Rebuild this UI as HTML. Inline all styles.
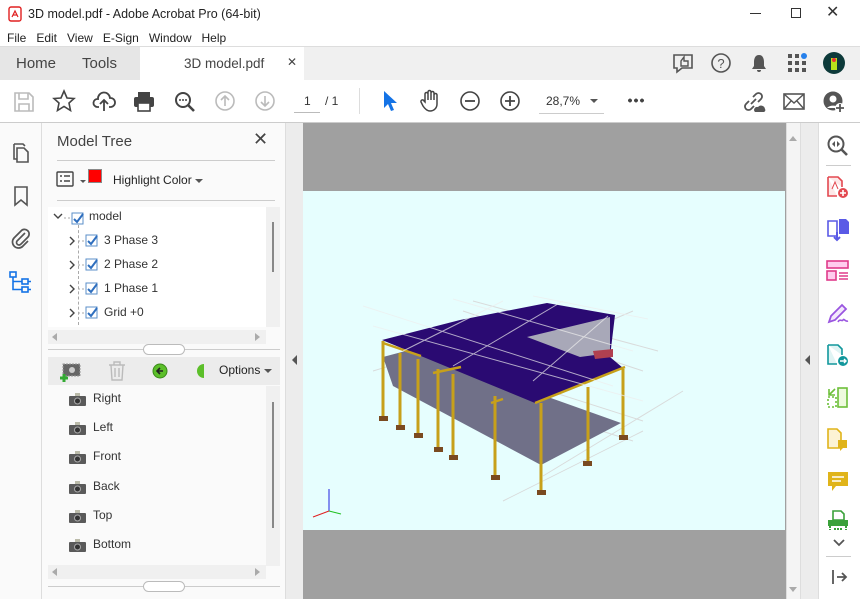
<!DOCTYPE html>
<html><head><meta charset="utf-8"><style>
*{margin:0;padding:0;box-sizing:border-box}
body{width:860px;height:599px;overflow:hidden;background:#fff;font-family:"Liberation Sans","Segoe UI",sans-serif;position:relative;color:#222}
.a{position:absolute}
.t{font-size:12px;color:#333}
svg{position:absolute;overflow:visible}
</style></head><body>
<div class="a" style="left:0;top:0;width:860px;height:28px;background:#fff"></div>
<svg style="left:8px;top:6px" width="14" height="16"><rect x="1" y="1" width="12" height="14" rx="2" fill="none" stroke="#e02020" stroke-width="1.4"/><path d="M4 11 L7 5 L10 11 M5 9 H9" stroke="#e02020" fill="none" stroke-width="1.2"/></svg>
<div class="a t" style="left:28px;top:7px;font-size:12.5px;color:#222">3D model.pdf - Adobe Acrobat Pro (64-bit)</div>
<div class="a" style="left:750px;top:13px;width:11px;height:1px;background:#333"></div>
<div class="a" style="left:791px;top:8px;width:10px;height:10px;border:1px solid #333"></div>
<div class="a" style="left:826px;top:2px;font-size:16px;color:#333">✕</div>
<div class="a t" style="left:7px;top:31px;color:#222">File&nbsp;&nbsp;&nbsp;Edit&nbsp;&nbsp;&nbsp;View&nbsp;&nbsp;&nbsp;E-Sign&nbsp;&nbsp;&nbsp;Window&nbsp;&nbsp;&nbsp;Help</div>
<div class="a" style="left:0;top:46px;width:860px;height:34px;background:#f0f0f0;border-top:1px solid #ddd"></div>
<div class="a" style="left:0;top:47px;width:140px;height:33px;background:#e6e6e6"></div>
<div class="a" style="left:140px;top:47px;width:164px;height:34px;background:#fff"></div>
<div class="a" style="left:16px;top:55px;font-size:15px;color:#444">Home</div>
<div class="a" style="left:82px;top:55px;font-size:15px;color:#444">Tools</div>
<div class="a" style="left:184px;top:56px;font-size:13.5px;color:#444">3D model.pdf</div>
<div class="a" style="left:287px;top:55px;font-size:12px;color:#444">✕</div>
<svg style="left:672px;top:53px" width="22" height="20"><path d="M2 2H20V15H10L5 19V15H2Z" fill="none" stroke="#555" stroke-width="1.6"/><path d="M9 13V8L12 4V8H16V13Z" fill="none" stroke="#555" stroke-width="1.4"/></svg>
<svg style="left:711px;top:53px" width="20" height="20"><circle cx="10" cy="10" r="9" fill="none" stroke="#555" stroke-width="1.6"/><text x="10" y="15" font-size="13" text-anchor="middle" fill="#555" font-family="Liberation Sans">?</text></svg>
<svg style="left:750px;top:54px" width="18" height="19"><path d="M9 1C5 1 4 5 4 8V12L2 15H16L14 12V8C14 5 13 1 9 1Z M7 16A2 2 0 0 0 11 16Z" fill="#555"/></svg>
<svg style="left:788px;top:54px" width="20" height="20"><g fill="#555"><rect x="0" y="0" width="4" height="4"/><rect x="7" y="0" width="4" height="4"/><rect x="0" y="7" width="4" height="4"/><rect x="7" y="7" width="4" height="4"/><rect x="14" y="7" width="4" height="4"/><rect x="0" y="14" width="4" height="4"/><rect x="7" y="14" width="4" height="4"/><rect x="14" y="14" width="4" height="4"/></g><circle cx="16" cy="2" r="3" fill="#2680eb"/></svg>
<svg style="left:823px;top:52px" width="22" height="22"><circle cx="11" cy="11" r="11" fill="#0d3a3a"/><path d="M8 6H14V18H8Z" fill="#b7e21c"/><circle cx="11" cy="8" r="2" fill="#e33"/></svg>
<div class="a" style="left:0;top:122px;width:860px;height:1px;background:#ccc"></div>
<svg style="left:14px;top:92px" width="20" height="20"><path d="M1 1H15L19 5V19H1Z M5 1V7H14V1 M5 19V12H15V19" fill="none" stroke="#bbb" stroke-width="1.6"/></svg>
<svg style="left:53px;top:90px" width="22" height="22"><path d="M11 1L14 8L21 8.5L16 13L17.5 20.5L11 16.5L4.5 20.5L6 13L1 8.5L8 8Z" fill="none" stroke="#444" stroke-width="1.6"/></svg>
<svg style="left:93px;top:91px" width="22" height="22"><path d="M6 16H4A4 4 0 0 1 5 8A6 6 0 0 1 17 7A4.5 4.5 0 0 1 18 16H16 M11 20V9 M7 13L11 9L15 13" fill="none" stroke="#444" stroke-width="1.8"/></svg>
<svg style="left:133px;top:91px" width="22" height="21"><path d="M5 1H17V6H5Z" fill="#444"/><rect x="1" y="6" width="20" height="10" rx="2" fill="#444"/><rect x="5" y="12" width="12" height="8" fill="#fff" stroke="#444" stroke-width="1.6"/></svg>
<svg style="left:174px;top:91px" width="22" height="22"><circle cx="9" cy="9" r="7" fill="none" stroke="#444" stroke-width="2"/><path d="M14 14L20 20" stroke="#444" stroke-width="2.6"/><circle cx="6" cy="9" r="1" fill="#444"/><circle cx="9" cy="9" r="1" fill="#444"/><circle cx="12" cy="9" r="1" fill="#444"/></svg>
<svg style="left:215px;top:91px" width="20" height="20"><circle cx="10" cy="10" r="9" fill="none" stroke="#bbb" stroke-width="1.6"/><path d="M10 15V5 M6 9L10 5L14 9" stroke="#bbb" stroke-width="1.6" fill="none"/></svg>
<svg style="left:255px;top:91px" width="20" height="20"><circle cx="10" cy="10" r="9" fill="none" stroke="#bbb" stroke-width="1.6"/><path d="M10 5V15 M6 11L10 15L14 11" stroke="#bbb" stroke-width="1.6" fill="none"/></svg>
<div class="a t" style="left:304px;top:94px">1</div>
<div class="a" style="left:294px;top:112px;width:26px;height:1px;background:#bbb"></div>
<div class="a t" style="left:325px;top:94px">/ 1</div>
<div class="a" style="left:359px;top:88px;width:1px;height:26px;background:#ddd"></div>
<svg style="left:382px;top:90px" width="16" height="22"><path d="M2 1V18L6 14L9 21L12 20L9 13H15Z" fill="#1473e6"/></svg>
<svg style="left:419px;top:89px" width="22" height="24"><path d="M6 13V5A1.5 1.5 0 0 1 9 5V11V3A1.5 1.5 0 0 1 12 3V11V4A1.5 1.5 0 0 1 15 4V11V6A1.5 1.5 0 0 1 18 6V15C18 19 15 22 11 22C8 22 6 20 4 17L2 13A1.5 1.5 0 0 1 5 12Z" fill="none" stroke="#444" stroke-width="1.5"/></svg>
<svg style="left:460px;top:91px" width="20" height="20"><circle cx="10" cy="10" r="9" fill="none" stroke="#444" stroke-width="1.6"/><path d="M5 10H15" stroke="#444" stroke-width="1.8"/></svg>
<svg style="left:500px;top:91px" width="20" height="20"><circle cx="10" cy="10" r="9" fill="none" stroke="#444" stroke-width="1.6"/><path d="M5 10H15M10 5V15" stroke="#444" stroke-width="1.8"/></svg>
<div class="a t" style="left:546px;top:94px">28,7%</div>
<div class="a" style="left:590px;top:99px;border:4px solid transparent;border-top:4px solid #555"></div>
<div class="a" style="left:539px;top:113px;width:65px;height:1px;background:#ccc"></div>
<div class="a" style="left:627px;top:98px;width:18px;height:5px;background:radial-gradient(circle,#444 1.8px,transparent 2px) 0 0/6px 5px"></div>
<svg style="left:742px;top:91px" width="24" height="22"><path d="M9 13L14 8 M7 10L4 13A3 3 0 0 0 9 18L12 15 M11 6L14 3A3 3 0 0 1 19 8L16 11" fill="none" stroke="#555" stroke-width="1.8"/><path d="M13 21A3 3 0 0 1 16 16A4 4 0 0 1 23 18A2 2 0 0 1 22 21Z" fill="#555"/></svg>
<svg style="left:783px;top:93px" width="22" height="17"><rect x="1" y="1" width="20" height="15" fill="none" stroke="#555" stroke-width="1.6"/><path d="M1 1L11 10L21 1M1 16L8 8M21 16L14 8" fill="none" stroke="#555" stroke-width="1.4"/></svg>
<svg style="left:823px;top:91px" width="22" height="22"><circle cx="10" cy="10" r="9.5" fill="#555"/><circle cx="10" cy="8" r="3.5" fill="#fff"/><path d="M4 17A7 5 0 0 1 16 17" fill="#fff"/><circle cx="17" cy="17" r="5" fill="#fff"/><path d="M17 13V21M13 17H21" stroke="#555" stroke-width="1.8"/></svg>

<div class="a" style="left:0;top:123px;width:42px;height:476px;background:#fafafa;border-right:1px solid #ddd"></div>
<svg style="left:12px;top:143px" width="20" height="22"><path d="M5 5V19H16V9L12 5Z M2 1H11L13 3 M2 1V16H5" fill="none" stroke="#555" stroke-width="1.6"/></svg>
<svg style="left:14px;top:186px" width="14" height="20"><path d="M1 1H13V19L7 14L1 19Z" fill="none" stroke="#555" stroke-width="1.6"/></svg>
<svg style="left:11px;top:227px" width="20" height="22"><path d="M14 6L6 14A2.5 2.5 0 0 0 10 17L17 10A4.5 4.5 0 0 0 10 4L3 11A6 6 0 0 0 12 19L17 14" fill="none" stroke="#555" stroke-width="1.7"/></svg>
<svg style="left:9px;top:271px" width="22" height="22"><g fill="none" stroke="#1473e6" stroke-width="1.6"><rect x="1" y="1" width="6" height="5"/><rect x="13" y="8" width="6" height="5"/><rect x="13" y="16" width="6" height="5"/><path d="M4 6V18.5H13M4 10.5H13M19 10.5H22M19 18.5H22"/></g></svg>

<div class="a" style="left:42px;top:123px;width:243px;height:476px;background:#fafafa"></div>
<div class="a" style="left:57px;top:133px;font-size:15px;color:#444">Model Tree</div>
<div class="a" style="left:253px;top:129px;font-size:18px;color:#444">✕</div>
<div class="a" style="left:57px;top:160px;width:218px;height:1px;background:#ccc"></div>
<svg style="left:56px;top:171px" width="18" height="16"><rect x="1" y="1" width="16" height="14" rx="1" fill="none" stroke="#444" stroke-width="1.4"/><path d="M4 5H6M8 5H14M4 10H6M8 10H14" stroke="#444" stroke-width="1.6"/></svg>
<div class="a" style="left:80px;top:180px;border:3px solid transparent;border-top:3px solid #555"></div>
<div class="a" style="left:88px;top:169px;width:14px;height:14px;background:#f00;border:1px solid #888"></div>
<div class="a" style="left:113px;top:173px;font-size:12px;color:#222">Highlight Color</div>
<div class="a" style="left:195px;top:179px;border:4px solid transparent;border-top:4px solid #555"></div>
<div class="a" style="left:57px;top:200px;width:218px;height:1px;background:#ccc"></div>
<div class="a" style="left:48px;top:207px;width:232px;height:120px;background:#fff"></div>
<div class="a" style="left:266px;top:207px;width:14px;height:120px;background:#f0f0f0"></div>
<div class="a" style="left:272px;top:222px;width:2px;height:50px;background:#888"></div>
<div class="a" style="left:48px;top:330px;width:218px;height:14px;background:#f0f0f0"></div>
<div class="a" style="left:52px;top:333px;border:4px solid transparent;border-right:5px solid #aaa;border-left:0"></div>
<div class="a" style="left:255px;top:333px;border:4px solid transparent;border-left:5px solid #aaa;border-right:0"></div>
<div class="a" style="left:78px;top:225px;width:0;height:100px;border-left:1px dashed #aaa"></div>
<svg style="left:52px;top:210px" width="120" height="115"><g fill="none" stroke="#444" stroke-width="1.4"><path d="M2 4L6 8L10 4"/><path d="M18 27L22 31L18 35M18 51L22 55L18 59M18 75L22 79L18 83M18 99L22 103L18 107"/></g>
<g stroke="#aaa" stroke-dasharray="2 2"><path d="M12 8H20M26 31H34M26 55H34M26 79H34M26 103H34"/></g>
<g><rect x="20" y="3" width="11" height="11" fill="#fff" stroke="#5b8fc9"/><rect x="34" y="25" width="11" height="11" fill="#fff" stroke="#5b8fc9"/><rect x="34" y="49" width="11" height="11" fill="#fff" stroke="#5b8fc9"/><rect x="34" y="73" width="11" height="11" fill="#fff" stroke="#5b8fc9"/><rect x="34" y="97" width="11" height="11" fill="#fff" stroke="#5b8fc9"/></g>
<g fill="none" stroke="#2f6fbf" stroke-width="2"><path d="M22 9L25 12L31 4M36 31L39 34L45 26M36 55L39 58L45 50M36 79L39 82L45 74M36 103L39 106L45 98"/></g></svg>
<div class="a t" style="left:89px;top:209px;color:#333">model</div>
<div class="a t" style="left:104px;top:233px">3 Phase 3</div>
<div class="a t" style="left:104px;top:257px">2 Phase 2</div>
<div class="a t" style="left:104px;top:281px">1 Phase 1</div>
<div class="a t" style="left:104px;top:305px">Grid +0</div>
<div class="a" style="left:48px;top:349px;width:232px;height:1px;background:#ccc"></div>
<div class="a" style="left:143px;top:344px;width:42px;height:11px;border:1px solid #bbb;border-radius:6px;background:#fff"></div>
<div class="a" style="left:48px;top:357px;width:232px;height:28px;background:#ececec"></div>
<svg style="left:60px;top:362px" width="22" height="20"><rect x="3" y="2" width="17" height="12" fill="#666" stroke="#999" stroke-dasharray="2 1"/><circle cx="12" cy="8" r="3" fill="#ccc"/><path d="M4 12V20M0 16H8" stroke="#3a3" stroke-width="3"/></svg>
<svg style="left:108px;top:361px" width="18" height="20"><path d="M1 4H17M6 4V1H12V4 M3 4L4 19H14L15 4 M7 7V16M11 7V16" fill="none" stroke="#bbb" stroke-width="1.4"/></svg>
<svg style="left:152px;top:363px" width="16" height="16"><circle cx="8" cy="8" r="7" fill="#5cbf2a" stroke="#3a8a1a"/><path d="M11 8H5M8 5L5 8L8 11" stroke="#222" stroke-width="1.6" fill="none"/></svg>
<svg style="left:198px;top:363px" width="6" height="16"><path d="M6 1A7 7 0 0 0 6 15Z" fill="#5cbf2a"/></svg>
<div class="a" style="left:219px;top:363px;font-size:12px;color:#222">Options</div>
<div class="a" style="left:264px;top:369px;border:4px solid transparent;border-top:4px solid #555"></div>
<div class="a" style="left:48px;top:386px;width:232px;height:178px;background:#fafafa"></div>
<div class="a" style="left:266px;top:386px;width:14px;height:180px;background:#f0f0f0"></div>
<div class="a" style="left:272px;top:402px;width:2px;height:126px;background:#888"></div>
<div class="a" style="left:48px;top:565px;width:218px;height:14px;background:#f0f0f0"></div>
<div class="a" style="left:52px;top:568px;border:4px solid transparent;border-right:5px solid #aaa;border-left:0"></div>
<div class="a" style="left:255px;top:568px;border:4px solid transparent;border-left:5px solid #aaa;border-right:0"></div>
<div class="a" style="left:48px;top:586px;width:232px;height:1px;background:#ccc"></div>
<div class="a" style="left:143px;top:581px;width:42px;height:11px;border:1px solid #bbb;border-radius:6px;background:#fff"></div>
<svg style="left:69px;top:393px" width="18" height="170"><g id="c"><rect x="0" y="3" width="17" height="10" rx="1" fill="#5a5a5a"/><rect x="6" y="0" width="5" height="3" fill="#bba"/><circle cx="8.5" cy="8" r="3" fill="#333" stroke="#aaa"/></g><use href="#c" y="29"/><use href="#c" y="58"/><use href="#c" y="88"/><use href="#c" y="117"/><use href="#c" y="146"/></svg>
<div class="a t" style="left:93px;top:391px">Right</div>
<div class="a t" style="left:93px;top:420px">Left</div>
<div class="a t" style="left:93px;top:449px">Front</div>
<div class="a t" style="left:93px;top:479px">Back</div>
<div class="a t" style="left:93px;top:508px">Top</div>
<div class="a t" style="left:93px;top:537px">Bottom</div>

<div class="a" style="left:285px;top:123px;width:18px;height:476px;background:#ececec;border-left:1px solid #ddd"></div>
<div class="a" style="left:292px;top:355px;border:5px solid transparent;border-right:5px solid #555;border-left:0"></div>
<div class="a" style="left:303px;top:123px;width:485px;height:476px;background:#a0a0a0"></div>
<div class="a" style="left:303px;top:191px;width:482px;height:339px;background:#e6fefe"></div>
<svg style="left:303px;top:191px" width="482" height="339">
<g stroke="#d8d8d8" stroke-width="1" opacity=".9"><path d="M80 170L330 250M90 150L340 230M160 120L340 180M170 110L355 160M200 310L340 240M230 260L280 235M70 180L200 140M130 205L330 120M100 190L220 150M240 285L380 200"/></g>
<polygon points="80,166 110,158 318,232 238,274 90,195" fill="#707088"/>
<polygon points="79,149 157,129 244,112 312,124 307,166 320,177 232,212" fill="#2a0a72"/>
<polygon points="224,146 307,126 307,162 277,166" fill="#a8a8b8"/>
<polygon points="290,160 310,158 310,166 292,168" fill="#b04050"/>
<g stroke="#c7a01a" stroke-width="3"><path d="M80 150V225M97 162V235M115 168V243M135 178V257M150 183V265M192 205V285M238 212V300M320 178V245M285 196V272"/></g>
<g stroke="#c7a01a" stroke-width="2.5"><path d="M80 152L118 165M130 182L158 176M188 212L200 208M232 212L322 176"/></g>
<g fill="#7a4a20"><rect x="76" y="225" width="9" height="5"/><rect x="93" y="234" width="9" height="5"/><rect x="111" y="242" width="9" height="5"/><rect x="131" y="256" width="9" height="5"/><rect x="146" y="264" width="9" height="5"/><rect x="188" y="284" width="9" height="5"/><rect x="234" y="299" width="9" height="5"/><rect x="280" y="270" width="9" height="5"/><rect x="316" y="244" width="9" height="5"/></g>
<g stroke="#eee" stroke-width="1" opacity=".7"><path d="M60 115L310 195M70 135L340 210M150 108L330 160M230 105L345 128M200 110L100 160M260 110L150 175M305 125L230 190"/></g>
<path d="M26 320V298" stroke="#2020e0"/><path d="M26 320L10 326" stroke="#e02020"/><path d="M26 320L38 323" stroke="#20c020"/>
</svg>
<div class="a" style="left:786px;top:123px;width:14px;height:476px;background:#f4f4f4;border-left:1px solid #ddd"></div>
<div class="a" style="left:789px;top:136px;border:4px solid transparent;border-bottom:5px solid #aaa;border-top:0"></div>
<div class="a" style="left:789px;top:587px;border:4px solid transparent;border-top:5px solid #aaa;border-bottom:0"></div>
<div class="a" style="left:800px;top:123px;width:18px;height:476px;background:#ececec;border-left:1px solid #ddd"></div>
<div class="a" style="left:805px;top:355px;border:5px solid transparent;border-right:5px solid #555;border-left:0"></div>
<div class="a" style="left:818px;top:123px;width:42px;height:476px;background:#fff;border-left:1px solid #ddd"></div>
<svg style="left:826px;top:134px" width="24" height="24"><circle cx="10" cy="10" r="7.5" fill="none" stroke="#555" stroke-width="2"/><path d="M15.5 15.5L21 21" stroke="#555" stroke-width="2.6"/><path d="M9 7L6 10L9 13M11 7L14 10L11 13" fill="#555"/></svg>
<div class="a" style="left:826px;top:165px;width:25px;height:1px;background:#ccc"></div>
<svg style="left:826px;top:176px" width="24" height="24"><path d="M2 1H12L16 5V11 M2 1V20H11" fill="#fde8e8" stroke="#e34850" stroke-width="1.6"/><circle cx="17" cy="17" r="5" fill="#e34850"/><path d="M17 14V20M14 17H20" stroke="#fff" stroke-width="1.6"/><path d="M6 13L9 6L12 13" stroke="#e34850" fill="none"/></svg>
<svg style="left:826px;top:218px" width="24" height="24"><path d="M2 3H11V18H2Z" fill="#fff" stroke="#5a5ae6" stroke-width="1.6"/><path d="M13 1H20L23 4V16H13Z" fill="#5a5ae6"/><path d="M11 14V22M8 19L11 22L14 19" stroke="#5a5ae6" stroke-width="2" fill="none"/></svg>
<svg style="left:826px;top:260px" width="24" height="22"><rect x="1" y="1" width="21" height="7" fill="#fce" stroke="#e03a8a" stroke-width="1.6"/><rect x="1" y="11" width="9" height="9" fill="#fce" stroke="#e03a8a" stroke-width="1.6"/><path d="M13 13H22M13 16H22M13 19H22" stroke="#e03a8a" stroke-width="1.4"/></svg>
<svg style="left:826px;top:302px" width="24" height="24"><path d="M3 20L5 14L16 3L20 7L9 18Z" fill="#f3e8fc" stroke="#9a55e0" stroke-width="1.8"/><path d="M12 20C14 16 16 20 17 18C18 16 19 20 22 19" stroke="#9a55e0" fill="none" stroke-width="1.6"/></svg>
<svg style="left:826px;top:344px" width="24" height="24"><path d="M2 1H12L16 5V11 M2 1V20H11" fill="#e0f4f4" stroke="#12979c" stroke-width="1.6"/><circle cx="17" cy="17" r="5" fill="#12979c"/><path d="M14 17H20M18 15L20 17L18 19" stroke="#fff" stroke-width="1.4" fill="none"/></svg>
<svg style="left:826px;top:386px" width="24" height="24"><rect x="12" y="2" width="9" height="19" fill="#eefade" stroke="#6dbf3a" stroke-width="1.6"/><rect x="2" y="11" width="8" height="10" fill="none" stroke="#6dbf3a" stroke-width="1.6" stroke-dasharray="2 2"/><path d="M3 9L9 3M3 3V9H9" stroke="#6dbf3a" fill="none" stroke-width="1.6"/></svg>
<svg style="left:826px;top:428px" width="24" height="24"><path d="M2 1H11L15 5V20H2Z" fill="#fcf3d4" stroke="#e0b41a" stroke-width="1.6"/><rect x="12" y="12" width="9" height="8" fill="#e0b41a"/><path d="M14 20V23L17 20" fill="#e0b41a"/></svg>
<svg style="left:826px;top:470px" width="24" height="24"><path d="M2 2H22V16H10L6 21V16H2Z" fill="#e0b41a"/><path d="M6 7H18M6 11H15" stroke="#fff" stroke-width="1.6"/></svg>
<svg style="left:826px;top:510px" width="24" height="24"><path d="M7 1H15L18 4V10H7Z" fill="#fff" stroke="#3aa13a" stroke-width="1.6"/><rect x="2" y="10" width="20" height="6" fill="#3aa13a"/><path d="M4 16V20M20 16V20M8 19H16" stroke="#3aa13a" stroke-width="2" stroke-dasharray="2 1"/></svg>
<svg style="left:832px;top:538px" width="14" height="10"><path d="M2 2L7 7L12 2" stroke="#555" stroke-width="1.8" fill="none"/></svg>
<div class="a" style="left:826px;top:556px;width:25px;height:1px;background:#ccc"></div>
<svg style="left:831px;top:568px" width="18" height="18"><path d="M2 2V16M6 9H15M11 5L15 9L11 13" stroke="#555" stroke-width="1.8" fill="none"/></svg>
</body></html>
